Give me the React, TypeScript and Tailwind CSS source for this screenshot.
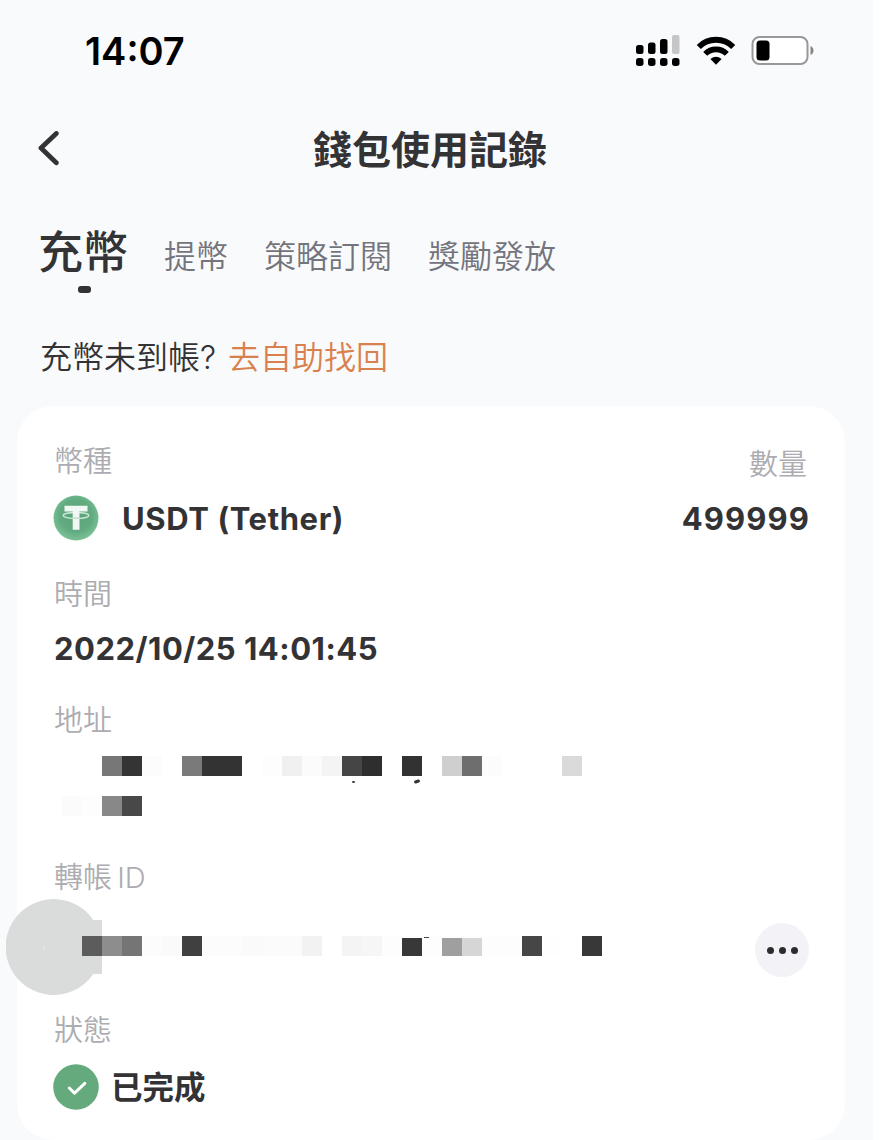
import React from 'react';

const tabs = ['提幣', '策略訂閱', '獎勵發放'];

// Redacted text is drawn as 20px blocks, '' leaves a block empty
const addressRows: string[][] = [
  ['', '', '#777777', '#343434', '#fcfcfc', '', '#7a7a7a', '#333333', '#333333', '', '#fdfdfd', '#f0f0f0', '#fbfbfb', '#f4f4f4', '#454545', '#2e2e2e', '', '#323232', '', '#cfcfcf', '#6e6e6e', '#fcfcfc', '', '', '', '#dadada'],
  ['#fbfbfb', '#fdfdfd', '#888888', '#484848'],
];
const transferRow: string[] = [
  '', '#5c5c5c', '#8d8d8d', '#757575', '#fcfcfc', '#fafafa', '#404040', '#fcfcfc', '#fcfcfc', '#fafafa', '#fbfbfb', '#fbfbfb', '#f2f2f2', '', '#f4f4f4', '#f6f6f6', '#fdfdfd', '#383838', '#fdfdfd', '#9f9f9f', '#d6d6d6', '#fdfdfd', '#fdfdfd', '#464646', '#fefefe', '', '#383838',
];

const MosaicRow: React.FC<{ cells: string[] }> = ({ cells }) => (
  <div className="flex h-5 pl-2">
    {cells.map((color, i) => (
      <span key={i} className="h-5 w-5 shrink-0" style={{ backgroundColor: color || 'transparent' }} />
    ))}
  </div>
);

const Label: React.FC<{ children: React.ReactNode }> = ({ children }) => (
  <div className="h-[42px] text-[29px] leading-[44px] font-[350] text-[#acacb1] [word-spacing:-3px] whitespace-nowrap">{children}</div>
);

const StatusIcons = () => (
  <div className="flex items-center">
    <svg width="46" height="32" viewBox="0 0 46 32" className="mr-[15px]">
      <rect x="1" y="10" width="7.5" height="9" rx="2.5" />
      <rect x="13" y="7.5" width="7.5" height="11.5" rx="2.5" />
      <rect x="25" y="4" width="7.5" height="15" rx="2.5" />
      <rect x="37" y="0" width="7.5" height="19" rx="2" fill="#c6c6c8" />
      {[1, 13, 25, 37].map(x => (
        <rect key={x} x={x} y="23" width="7.5" height="8" rx="2.7" />
      ))}
    </svg>
    <svg width="40" height="30" viewBox="0 0 40 30" className="mr-[15px]">
      <path d="M2.8 11A24 24 0 0 1 37.2 11" fill="none" stroke="#000" strokeWidth="5.8" />
      <path d="M9.2 17.9A15.2 15.2 0 0 1 30.8 17.9" fill="none" stroke="#000" strokeWidth="5.6" />
      <path d="M14.4 22.9Q20 18.6 25.6 22.9L20 28.8Z" />
    </svg>
    <svg width="63" height="30" viewBox="0 0 63 30">
      <rect x="1.5" y="1" width="55" height="27" rx="7" fill="#fff" stroke="#98989a" strokeWidth="2" />
      <rect x="5.5" y="4.5" width="13" height="20" rx="3.5" />
      <path d="M59.5 10Q62.5 11.5 62.5 14.5T59.5 19Z" fill="#858587" />
    </svg>
  </div>
);

const TetherIcon = () => (
  <svg width="46" height="46" viewBox="0 0 46 46" className="-ml-px shrink-0">
    <defs>
      <radialGradient id="coin" cx="50%" cy="45%" r="55%">
        <stop offset="0" stopColor="#5aa377" />
        <stop offset="0.65" stopColor="#62ab80" />
        <stop offset="1" stopColor="#7bc197" />
      </radialGradient>
    </defs>
    <circle cx="23" cy="23" r="22.5" fill="url(#coin)" />
    <ellipse cx="23" cy="20.5" rx="12.8" ry="3" fill="none" stroke="#cce8d7" strokeWidth="1.4" />
    <path d="M11.5 10.8H34.5V16.6H26.5V34.8H19.7V16.6H11.5Z" fill="#f1f8f3" />
    <path d="M19.7 23.2H26.5" stroke="#b4d7c1" strokeWidth="1.2" />
  </svg>
);

export default function App() {
  return (
    <div className="h-[1140px] w-[886px] overflow-hidden bg-white font-[Inter,'Noto_Sans_CJK_TC',sans-serif] text-[#333335]">
      <div className="h-full w-[873px] bg-[#f9fafc]">
        <div className="flex h-[102px] items-center justify-between pr-[59px] pl-[85px]">
          <span className="text-[38px] leading-none font-semibold text-black">14:07</span>
          <StatusIcons />
        </div>

        <header className="flex h-[94px] items-center pl-[37px]">
          <svg width="24" height="36" viewBox="0 0 24 36" fill="none" stroke="#333335" strokeWidth="4.8" strokeLinecap="round" strokeLinejoin="round">
            <path d="M19.3 2.5L4 17L19.3 31.8" />
          </svg>
          <h1 className="ml-[252px] text-[39px] leading-none font-bold whitespace-nowrap">錢包使用記錄</h1>
        </header>

        <nav className="flex h-[108px] pt-[26px] pl-[38px]">
          <div className="w-[92px]">
            <div className="h-[60px] text-[45px] leading-[62px] font-medium whitespace-nowrap">充幣</div>
            <div className="mt-[4px] ml-[40px] h-[7px] w-[13px] rounded-[3px] bg-[#333335]" />
          </div>
          <div className="ml-[34px] flex gap-[36px] text-[32px] leading-[70px] font-[350] text-[#74747c]">
            {tabs.map(tab => (
              <span key={tab} className="whitespace-nowrap">{tab}</span>
            ))}
          </div>
        </nav>

        <div className="flex h-[102px] pt-[30px] pl-[40px] text-[32px] leading-[48px] font-[350]">
          <span>充幣未到帳?</span>
          <a className="ml-[12px] text-[#d9814e]">去自助找回</a>
        </div>

        <main className="ml-[17px] h-[734px] w-[828px] rounded-[36px] bg-white px-[37px] pt-[34px]">
          <div className="flex justify-between">
            <Label>幣種</Label>
            <div className="mt-[3px] mr-px -mb-[3px]"><Label>數量</Label></div>
          </div>
          <div className="mt-[13px] flex h-[46px] items-center text-[31px] leading-[48px] font-bold">
            <TetherIcon />
            <span className="mt-px ml-[23px] tracking-[0.6px]">USDT (Tether)</span>
            <span className="mt-px -mr-[2px] ml-auto tracking-[1.1px]">499999</span>
          </div>

          <div className="mt-[32px]"><Label>時間</Label></div>
          <div className="mt-[12px] h-[42px] text-[31px] leading-[43px] font-bold tracking-[0.5px] whitespace-nowrap">2022/10/25 14:01:45</div>

          <div className="mt-[30px]"><Label>地址</Label></div>
          <div className="relative mt-[15px] flex flex-col gap-5">
            {addressRows.map((cells, i) => (
              <MosaicRow key={i} cells={cells} />
            ))}
            <span className="absolute top-[25px] left-[298px] h-[2px] w-[3px] rounded-full bg-[#444]" />
            <span className="absolute top-[24px] left-[360px] h-[3px] w-[6px] -rotate-[20deg] rounded-full bg-[#333]" />
          </div>

          <div className="mt-[40px]"><Label>轉帳 ID</Label></div>
          <div className="relative mt-[25px] flex h-[54px] items-center">
            <svg width="96" height="96" viewBox="0 0 96 96" className="absolute -top-[24px] -left-[48px]">
              <path d="M87.3 21H96V75H87.3A48 48 0 1 1 87.3 21Z" fill="#dadbdb" />
              <rect x="37" y="47" width="1.5" height="3" fill="#e8e8e8" />
            </svg>
            <div className="relative -mt-[8px]">
              <MosaicRow cells={transferRow} />
              <span className="absolute top-0 left-[348px] h-[2px] w-[80px] bg-[#fdfdfd]" />
              <span className="absolute top-px left-[370px] h-px w-[5px] bg-[#444]" />
            </div>
            <button className="-mr-px ml-auto flex h-[54px] w-[54px] items-center justify-center gap-[5px] rounded-full bg-[#f2f2f7]">
              <span className="h-[7px] w-[7px] rounded-full bg-[#2c2c2f]" />
              <span className="h-[7px] w-[7px] rounded-full bg-[#2c2c2f]" />
              <span className="h-[7px] w-[7px] rounded-full bg-[#2c2c2f]" />
            </button>
          </div>

          <div className="mt-[32px]"><Label>狀態</Label></div>
          <div className="mt-[13px] flex h-[45px] items-center">
            <svg width="46" height="46" viewBox="0 0 46 46" className="-ml-px shrink-0">
              <circle cx="23" cy="23" r="22.8" fill="#65aa7d" />
              <path d="M16.3 24L21.5 29.2L31.8 19.4" fill="none" stroke="#fff" strokeWidth="3" strokeLinecap="round" strokeLinejoin="round" />
            </svg>
            <span className="mt-[2px] ml-[12px] text-[31.5px] leading-none font-bold">已完成</span>
          </div>
        </main>
      </div>
    </div>
  );
}
